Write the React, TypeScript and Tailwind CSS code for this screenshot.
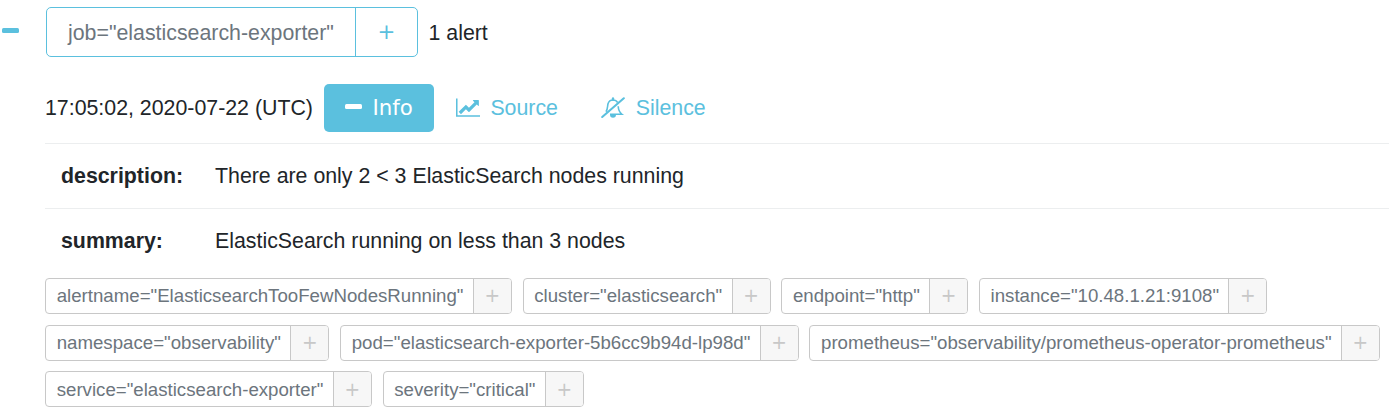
import type { ReactNode } from "react";

const annotations = [
  { name: "description:", value: "There are only 2 < 3 ElasticSearch nodes running" },
  { name: "summary:", value: "ElasticSearch running on less than 3 nodes" },
];

const labelRows = [
  [
    'alertname="ElasticsearchTooFewNodesRunning"',
    'cluster="elasticsearch"',
    'endpoint="http"',
    'instance="10.48.1.21:9108"',
  ],
  [
    'namespace="observability"',
    'pod="elasticsearch-exporter-5b6cc9b94d-lp98d"',
    'prometheus="observability/prometheus-operator-prometheus"',
  ],
  ['service="elasticsearch-exporter"', 'severity="critical"'],
];

function Minus({ className }: { className: string }) {
  return <span className={`block h-[5px] w-[17px] shrink-0 rounded-[1.500px] ${className}`} />;
}

function ChartIcon() {
  return (
    <svg className="mb-[0.660px] h-[21.33px] w-[24.4px] shrink-0" viewBox="0 0 2048 1792" fill="currentColor">
      <path d="M2048 1536v128h-2048v-1536h128v1408h1920zm-128-1248v435q0 21-19.5 29.5t-35.5-7.5l-121-121-633 633q-10 10-23 10t-23-10l-233-233-416 416-192-192 585-585q10-10 23-10t23 10l233 233 464-464-121-121q-16-16-7.5-35.5t29.5-19.5h435q14 0 23 9t9 23z" />
    </svg>
  );
}

function BellSlashIcon() {
  return (
    <svg className="h-[22px] w-[24px] shrink-0" viewBox="0 0 24 22" fill="none" stroke="currentColor">
      <path d="M5 14.800C6.800 12.200 6.400 9 7 6.800C7.800 4.200 9.600 3 12 3C14.400 3 15.800 4 16.700 5.600" strokeWidth="1.600" />
      <path d="M17.200 9.200C17.400 12.500 18.200 15 20.900 17.300H9" strokeWidth="1.600" />
      <path d="M12 1.300V3" strokeWidth="2.200" strokeLinecap="round" />
      <path d="M9 17.500H15A3 3.300 0 0 1 9 17.500Z" fill="currentColor" stroke="none" />
      <path d="M1.200 20L22.800 1.300" strokeWidth="2.100" strokeLinecap="round" />
    </svg>
  );
}

function Tag({ children }: { children: ReactNode }) {
  return (
    <div className="flex h-9 rounded-[4px] border border-[#c8c8c8] text-[18.67px]">
      <span className="h-[34px] pr-[9.300px] pl-[10.700px] whitespace-pre text-[#6c757d]">{children}</span>
      <span className="h-[34px] w-[38px] rounded-r-[3px] border-l border-[#c8c8c8] bg-[#f7f7f7] text-center font-['DejaVu_Sans',sans-serif] text-[#c8c8c8]">
        +
      </span>
    </div>
  );
}

export default function App() {
  return (
    <main className="flex h-[416px] w-full overflow-hidden bg-white font-['Liberation_Sans',Arial,sans-serif] text-[21.33px] leading-8 text-[#212529]">
      <div className="w-[45px] shrink-0 pt-[28px] pl-[2px]">
        <Minus className="bg-[#5bc0de]" />
      </div>
      <div className="min-w-0 flex-1">
        <div className="mt-[7px] ml-px flex h-[50px] items-stretch">
          <div className="flex h-[50px] rounded-[5px] border border-[#5bc0de] leading-[50px]">
            <span className="w-[308px] pl-[21px] whitespace-pre text-[#6c757d]">job="elasticsearch-exporter"</span>
            <span className="w-[62px] border-l border-[#5bc0de] text-center font-['DejaVu_Sans',sans-serif] leading-[48px] text-[#5bc0de]">+</span>
          </div>
          <span className="pl-[10.500px] leading-[53px]">1 alert</span>
        </div>
        <div className="mt-[27px] flex h-12 items-center text-[#5bc0de]">
          <span className="w-[279px] whitespace-pre text-[#212529]">17:05:02, 2020-07-22 (UTC)</span>
          <button className="flex h-12 w-[110px] items-center rounded-[5px] bg-[#5bc0de] pl-[21px] font-['DejaVu_Sans',sans-serif] text-white">
            <Minus className="mb-[3px] bg-white" />
            <span className="pl-[10.500px]">Info</span>
          </button>
          <button className="ml-[21.500px] flex items-center">
            <ChartIcon />
            <span className="pl-[10.500px]">Source</span>
          </button>
          <button className="ml-[43.300px] flex items-center">
            <BellSlashIcon />
            <span className="pl-[10.500px]">Silence</span>
          </button>
        </div>
        <div className="mt-[11px]">
          {annotations.map((a) => (
            <div key={a.name} className="flex h-[65px] border-t border-[#eceeef] pt-[16px] pl-4">
              <span className="w-[154px] font-bold">{a.name}</span>
              <span>{a.value}</span>
            </div>
          ))}
        </div>
        <div className="mt-[5.050px] flex flex-col gap-[10.670px]">
          {labelRows.map((row) => (
            <div key={row[0]} className="flex gap-[10.780px] leading-[34.300px] last:leading-[36px]">
              {row.map((label) => (
                <Tag key={label}>{label}</Tag>
              ))}
            </div>
          ))}
        </div>
      </div>
    </main>
  );
}
